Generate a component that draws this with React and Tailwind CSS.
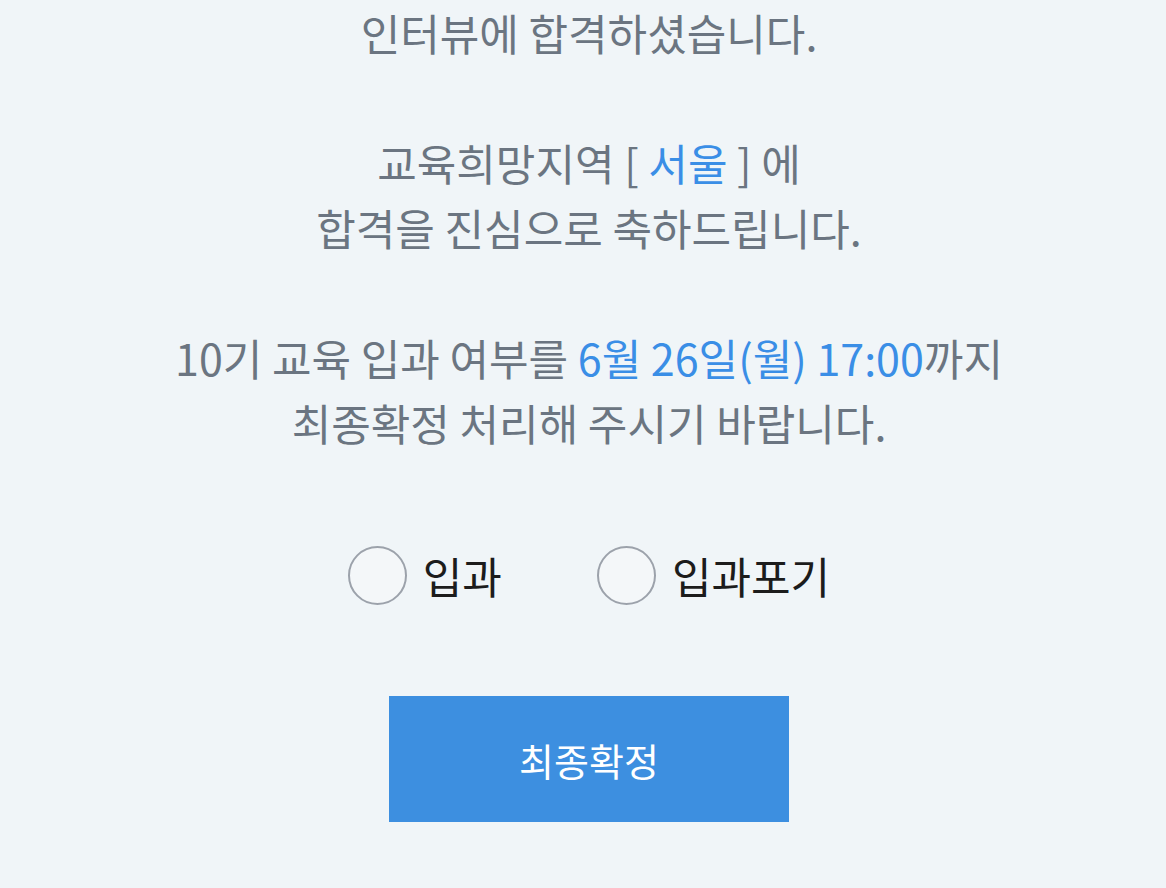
import { useState } from "react";

// Final-confirmation step shown after a successful interview.
export default function App() {
  const [choice, setChoice] = useState(null);

  const options = [
    { value: "join", label: "입과" },
    { value: "giveup", label: "입과포기" },
  ];

  return (
    <div
      className="min-h-[888px] bg-[#f0f5f8] pl-3 flex flex-col items-center"
      style={{ fontFamily: '"Noto Sans CJK KR", "Noto Sans", sans-serif' }}
    >
      <div className="text-center text-[43px] leading-[65px] text-[#6b7581]">
        <p>인터뷰에 합격하셨습니다.</p>
        <p>&nbsp;</p>
        <p>
          교육희망지역 [ <span className="text-[#3a8ee6]">서울</span> ] 에
        </p>
        <p>합격을 진심으로 축하드립니다.</p>
        <p>&nbsp;</p>
        <p>
          10기 교육 입과 여부를{" "}
          <span className="text-[#3a8ee6]">6월 26일(월) 17:00</span>까지
        </p>
        <p>최종확정 처리해 주시기 바랍니다.</p>
      </div>

      <div className="mt-[91px] flex items-center gap-[95px]">
        {options.map((opt) => (
          <label key={opt.value} className="flex items-center gap-[16px] cursor-pointer">
            <input
              type="radio"
              name="enroll"
              value={opt.value}
              checked={choice === opt.value}
              onChange={() => setChoice(opt.value)}
              className="appearance-none w-[59px] h-[59px] rounded-full border-2 border-[#9ca2ab] bg-[#f4f7f9] checked:border-[#3a8ee6] checked:border-[14px] m-0"
            />
            <span className="text-[43px] leading-none text-[#1c1c1c]">{opt.label}</span>
          </label>
        ))}
      </div>

      <button className="mt-[91px] w-[400px] h-[126px] bg-[#3d8fe0] text-white text-[38px]">
        최종확정
      </button>
    </div>
  );
}
